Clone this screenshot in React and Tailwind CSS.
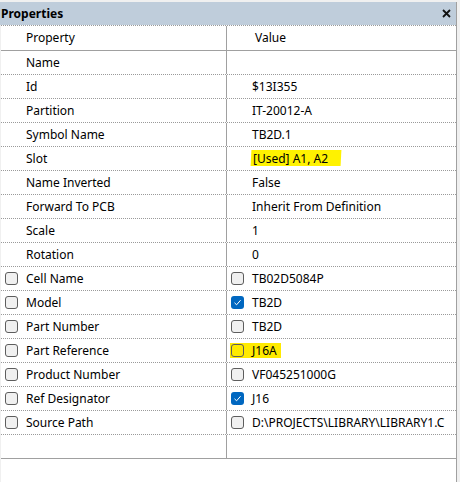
import React from 'react';

const ROWS = [
  { name: 'Name', value: '' },
  { name: 'Id', value: '$13I355' },
  { name: 'Partition', value: 'IT-20012-A' },
  { name: 'Symbol Name', value: 'TB2D.1' },
  { name: 'Slot', value: '[Used] A1, A2', mark: 'text' },
  { name: 'Name Inverted', value: 'False' },
  { name: 'Forward To PCB', value: 'Inherit From Definition' },
  { name: 'Scale', value: '1' },
  { name: 'Rotation', value: '0' },
  { name: 'Cell Name', value: 'TB02D5084P', box: true, checked: false },
  { name: 'Model', value: 'TB2D', box: true, checked: true },
  { name: 'Part Number', value: 'TB2D', box: true, checked: false },
  { name: 'Part Reference', value: 'J16A', box: true, checked: false, mark: 'box' },
  { name: 'Product Number', value: 'VF045251000G', box: true, checked: false },
  { name: 'Ref Designator', value: 'J16', box: true, checked: true },
  { name: 'Source Path', value: 'D:\\PROJECTS\\LIBRARY\\LIBRARY1.C', box: true, checked: false },
];

function Check({ checked, yellow }) {
  if (checked) {
    return (
      <span className="w-[13px] h-[13px] rounded-[3px] bg-[#0067c0] flex items-center justify-center shrink-0">
        <svg width="9" height="9" viewBox="0 0 9 9">
          <path d="M1.5 4.8 L3.6 6.8 L7.6 2.2" fill="none" stroke="#fff" strokeWidth="1" />
        </svg>
      </span>
    );
  }
  return (
    <span
      className={`w-[13px] h-[13px] rounded-[3px] border border-[#5d5d5d] shrink-0 ${
        yellow ? 'bg-transparent' : 'bg-[#f0f0f0]'
      }`}
    />
  );
}

export default function App() {
  return (
    <div
      className="w-[460px] h-[482px] bg-[#f0f0f0] pt-[2px] text-[12px] text-black overflow-hidden"
      style={{ fontFamily: '"Noto Sans", "Open Sans", sans-serif' }}
    >
      <div className="flex flex-col w-[457px] h-[480px] border-r border-[#a0a0a0]">
        {/* Title bar */}
        <div className="h-[23px] bg-[#bfcddb] flex items-center justify-between pl-px pr-[5px] shrink-0">
          <span className="font-bold leading-none">Properties</span>
          <svg width="9" height="9" viewBox="0 0 9 9">
            <path d="M1 1 L8 8 M8 1 L1 8" stroke="#111" strokeWidth="1.8" />
          </svg>
        </div>

        <div className="flex-1 ml-px bg-white flex flex-col">
          {/* Header */}
          <div className="grid grid-cols-[226px_1fr] h-[25px] border-t border-dotted border-[#9a9a9a]">
            <div className="pl-[25px] flex items-center border-r border-[#a0a0a0]">Property</div>
            <div className="pl-[28px] flex items-center">Value</div>
          </div>
          <div className="h-px bg-[#a0a0a0]" />

          {ROWS.map(r => (
            <div key={r.name} className="grid grid-cols-[226px_1fr] h-[24px] border-b border-dotted border-[#9a9a9a]">
              <div className="flex items-center border-r border-[#a0a0a0] pl-[4px] gap-[8px]">
                {r.box ? <Check checked={false} /> : <span className="w-[13px] shrink-0" />}
                <span>{r.name}</span>
              </div>
              <div className="flex items-center min-w-0 overflow-hidden">
                {r.box ? (
                  r.mark === 'box' ? (
                    <span className="flex items-center gap-[8px] bg-[#ffea00] ml-[3px] pl-px pr-[4px] h-[15px]">
                      <Check yellow />
                      <span>{r.value}</span>
                    </span>
                  ) : (
                    <span className="flex items-center gap-[8px] pl-[4px] whitespace-nowrap">
                      <Check checked={r.checked} />
                      <span>{r.value}</span>
                    </span>
                  )
                ) : r.mark === 'text' ? (
                  <span className="ml-[24px] bg-[#fff200] pl-[2px] pr-[13px] h-[16px] flex items-center -skew-x-3 -mt-[2px]">
                    <span className="skew-x-3 mt-[2px]">{r.value}</span>
                  </span>
                ) : (
                  <span className="pl-[25px] whitespace-nowrap">{r.value}</span>
                )}
              </div>
            </div>
          ))}

          {/* Empty row */}
          <div className="grid grid-cols-[226px_1fr] h-[24px] border-b border-[#a0a0a0]">
            <div className="border-r border-[#a0a0a0]" />
            <div />
          </div>
        </div>
      </div>
    </div>
  );
}
